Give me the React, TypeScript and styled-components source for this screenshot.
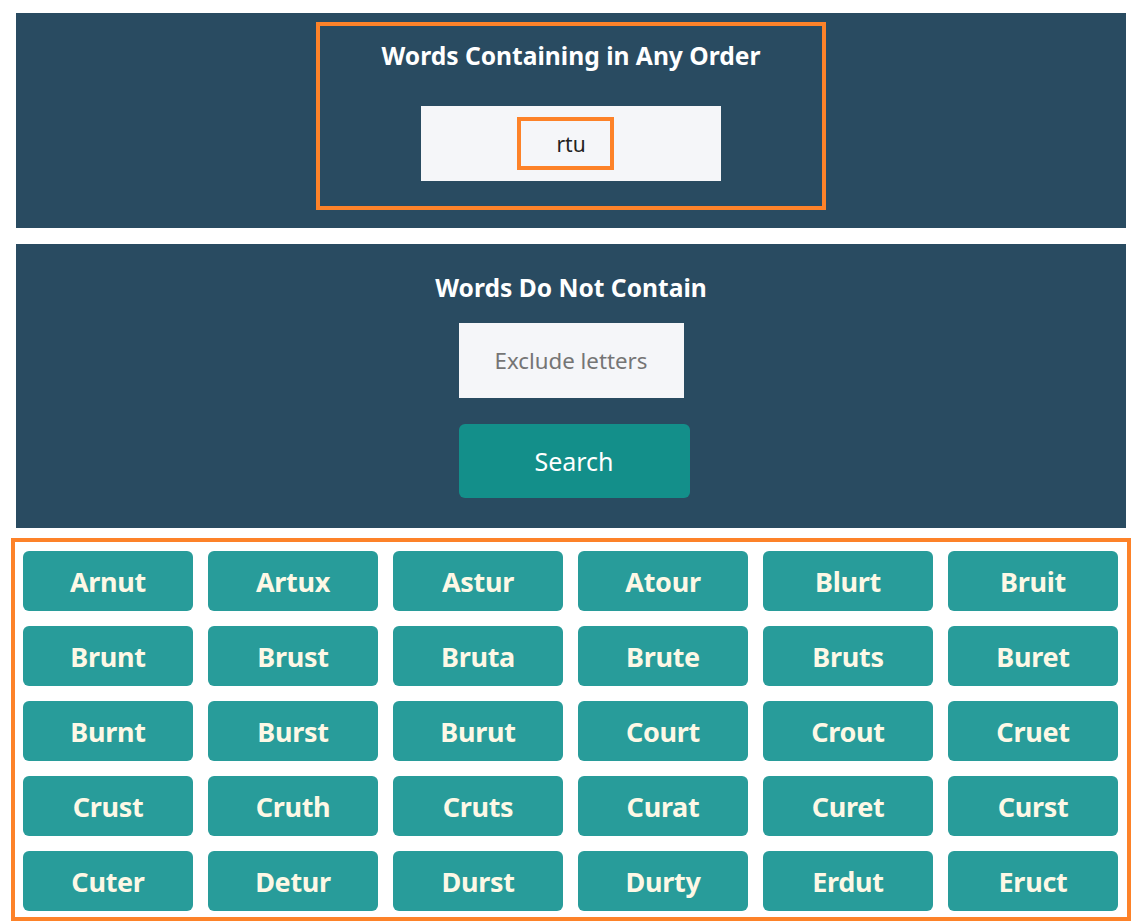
import { FC } from 'react'
import styled, { createGlobalStyle } from 'styled-components'

const GlobalStyle = createGlobalStyle`
  body {
    margin: 0;
    background: #fff;
    font-family: 'Noto Sans', 'Open Sans', sans-serif;
  }
`

const WORDS = [
  'Arnut', 'Artux', 'Astur', 'Atour', 'Blurt', 'Bruit',
  'Brunt', 'Brust', 'Bruta', 'Brute', 'Bruts', 'Buret',
  'Burnt', 'Burst', 'Burut', 'Court', 'Crout', 'Cruet',
  'Crust', 'Cruth', 'Cruts', 'Curat', 'Curet', 'Curst',
  'Cuter', 'Detur', 'Durst', 'Durty', 'Erdut', 'Eruct'
]

const Page = styled.div`
  padding: 13px 22px 0 16px;
  display: flex;
  flex-direction: column;
`

const Panel = styled.section<{ $height: number; $gap: number }>`
  background: #294b61;
  height: ${(p) => p.$height}px;
  margin-bottom: ${(p) => p.$gap}px;
  display: flex;
  flex-direction: column;
  align-items: center;
  box-sizing: border-box;
`

const Highlight = styled.div`
  margin-top: 9px;
  width: 510px;
  height: 188px;
  box-sizing: border-box;
  border: 4px solid #fd8229;
  display: flex;
  flex-direction: column;
  align-items: center;
`

const Title = styled.h2<{ $top: number }>`
  margin: ${(p) => p.$top}px 0 0;
  color: #fff;
  font-size: 24.6px;
  font-weight: 700;
  line-height: 30px;
`

const InputBox = styled.div<{ $width: number; $top: number }>`
  margin-top: ${(p) => p.$top}px;
  width: ${(p) => p.$width}px;
  height: 75px;
  background: #f5f6f9;
  display: flex;
  align-items: center;
  justify-content: center;
  font-size: 21px;
  color: #222;
`

const Typed = styled.span`
  width: 97px;
  height: 53px;
  margin-right: 11px;
  padding-left: 11px;
  box-sizing: border-box;
  border: 4px solid #fd8229;
  display: flex;
  align-items: center;
  justify-content: center;
`

const Placeholder = styled.span`
  color: #757575;
  font-size: 22.3px;
`

const SearchButton = styled.button`
  margin: 26px 0 0 6px;
  width: 231px;
  height: 74px;
  border: none;
  border-radius: 6px;
  background: #138f8a;
  color: #fff;
  font-family: inherit;
  font-size: 25px;
  padding: 0;
`

const Results = styled.div`
  margin: 0 -5px;
  border: 4px solid #fd8229;
  padding: 9px 8px 6px 8px;
  display: grid;
  grid-template-columns: repeat(6, 170px);
  gap: 15px;
`

const Word = styled.div`
  height: 60px;
  border-radius: 6px;
  background: #289c9a;
  color: #fdf8e6;
  font-size: 27px;
  font-weight: 700;
  display: flex;
  align-items: center;
  justify-content: center;
  letter-spacing: -0.3px;
`

const App: FC = () => {
  return (
    <Page>
      <GlobalStyle />
      <Panel $height={215} $gap={16}>
        <Highlight>
          <Title $top={15}>Words Containing in Any Order</Title>
          <InputBox $width={300} $top={35}>
            <Typed>rtu</Typed>
          </InputBox>
        </Highlight>
      </Panel>
      <Panel $height={284} $gap={10}>
        <Title $top={29}>Words Do Not Contain</Title>
        <InputBox $width={225} $top={20}>
          <Placeholder>Exclude letters</Placeholder>
        </InputBox>
        <SearchButton>Search</SearchButton>
      </Panel>
      <Results>
        {WORDS.map((w) => (
          <Word key={w}>{w}</Word>
        ))}
      </Results>
    </Page>
  )
}

export default App
